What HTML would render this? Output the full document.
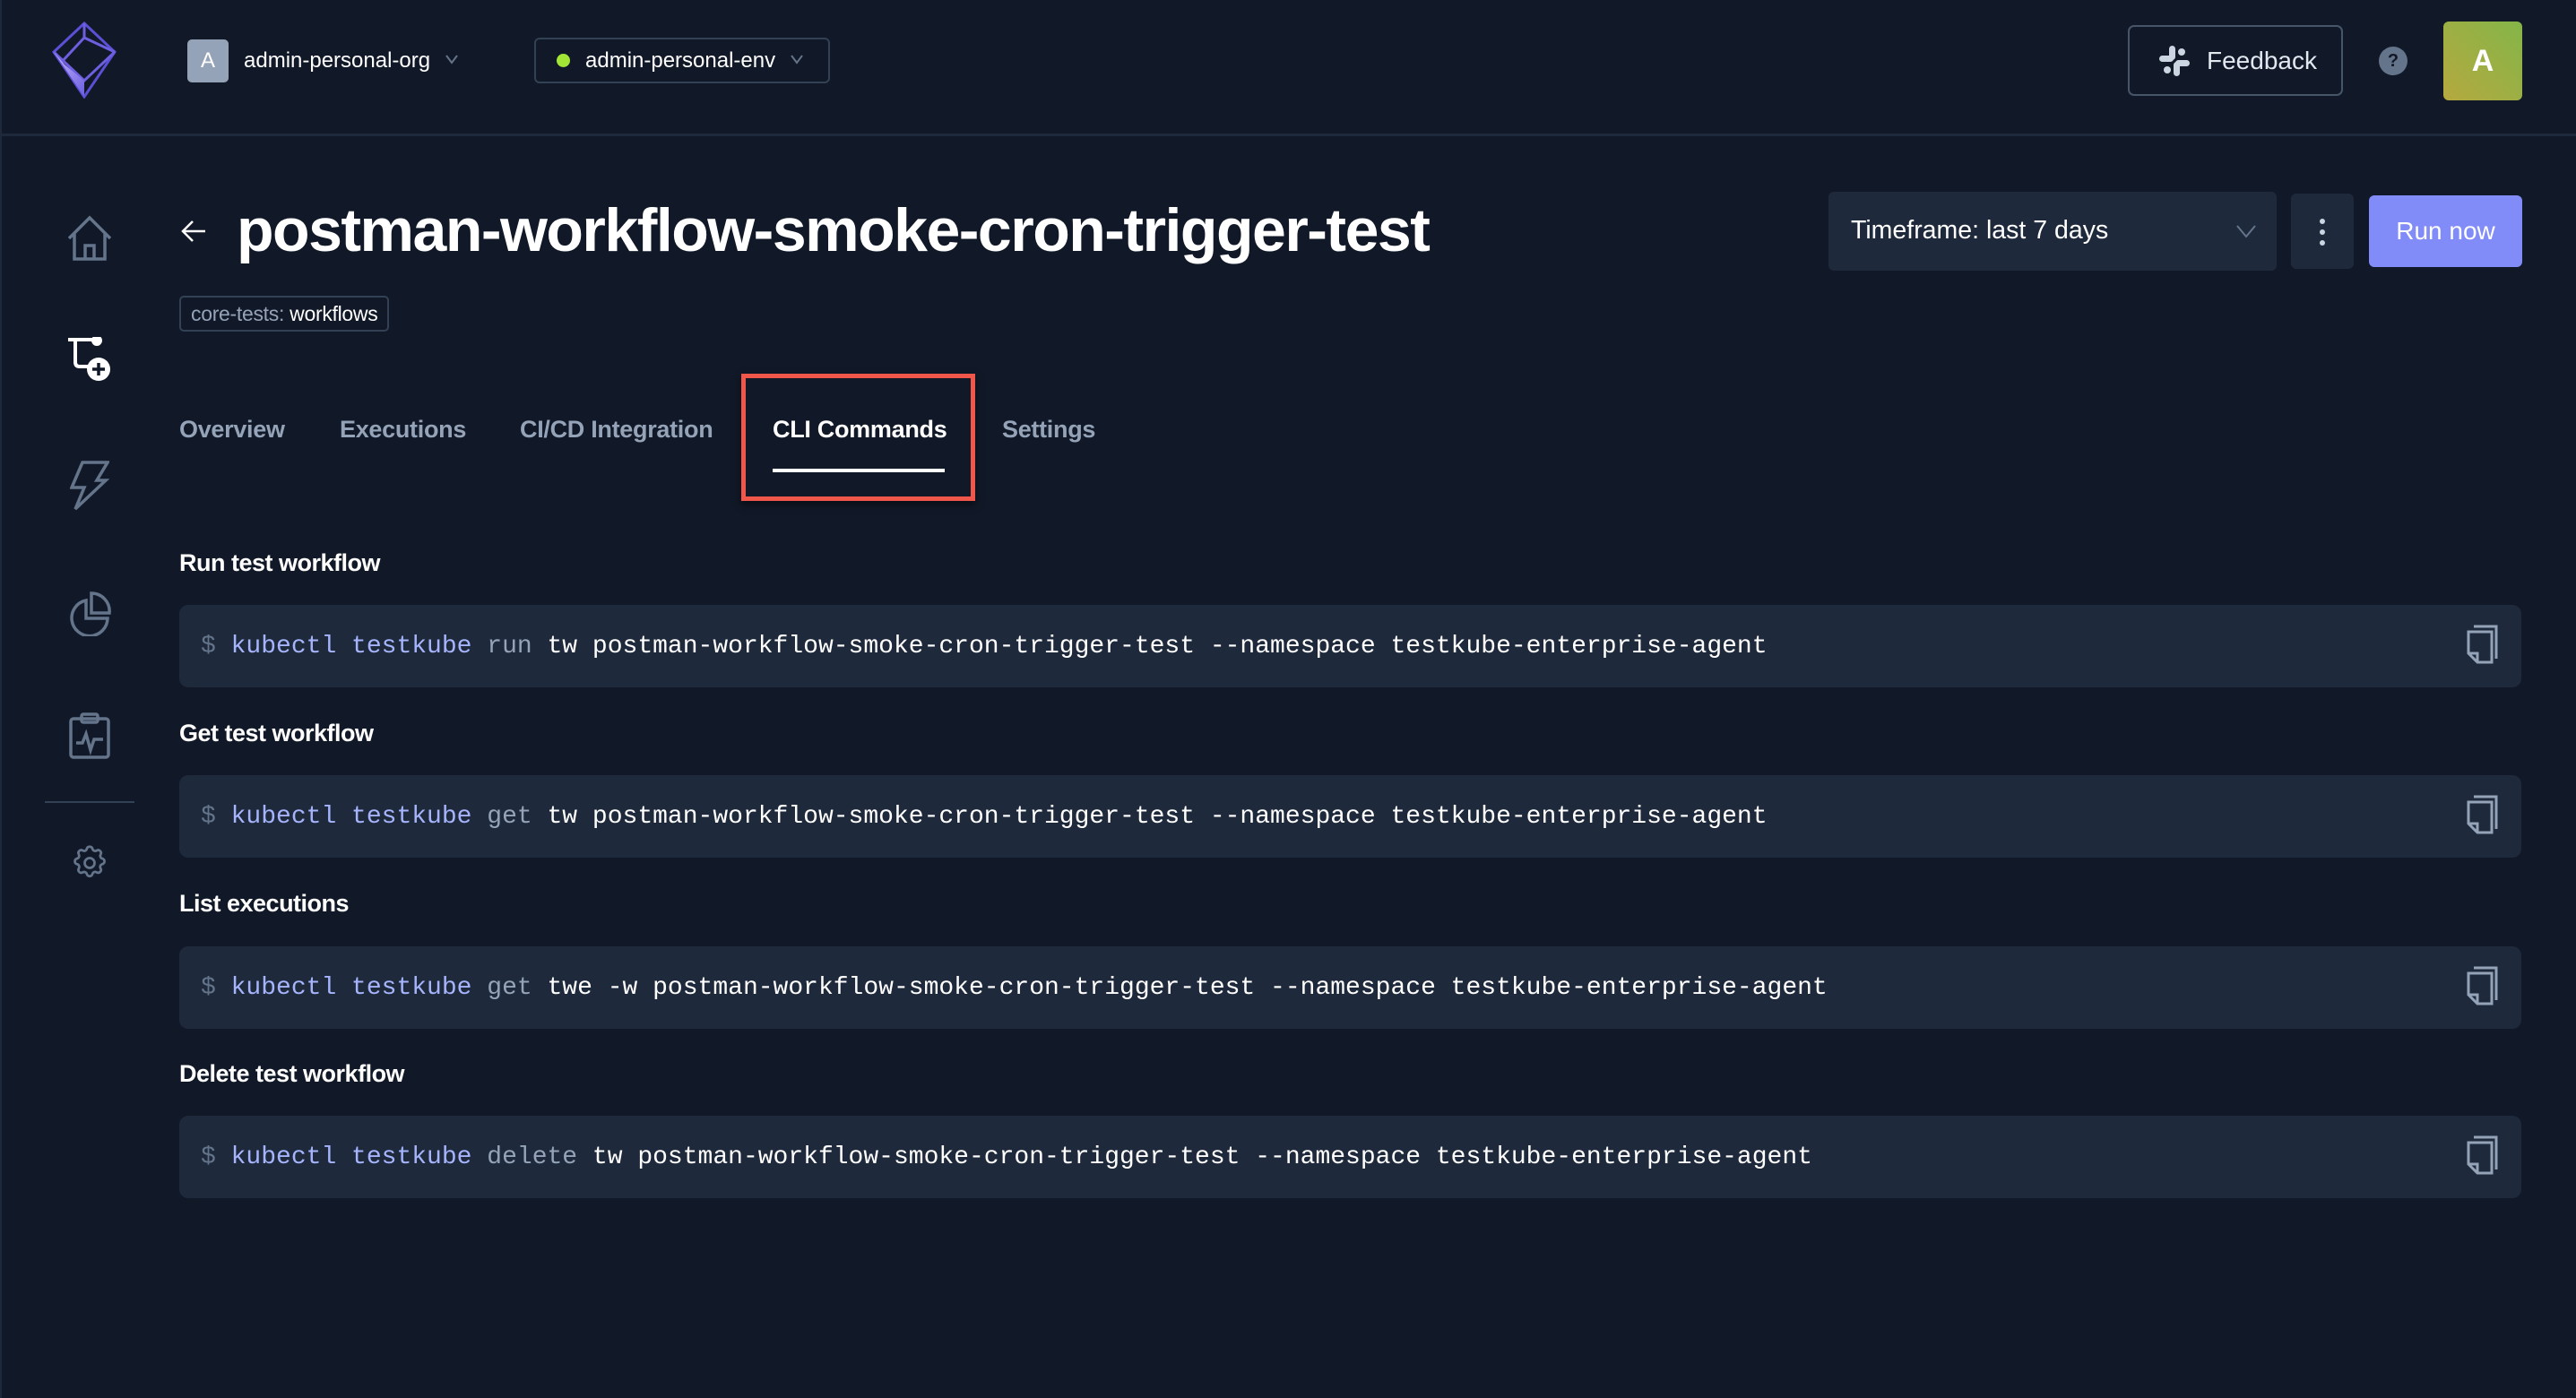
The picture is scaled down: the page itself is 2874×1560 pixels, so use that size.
<!DOCTYPE html>
<html><head><meta charset="utf-8"><style>
*{margin:0;padding:0;box-sizing:border-box}
body{width:2874px;height:1560px;background:#111827;font-family:"Liberation Sans",sans-serif;position:relative;overflow:hidden;color:#fff}
.a{position:absolute}
.top{left:0;top:0;width:2874px;height:152px;border-bottom:3px solid #1e293b}
.t{white-space:nowrap}
.code{left:200px;width:2613px;height:92px;background:#1e293b;border-radius:10px}
.code .txt{position:absolute;left:24px;top:1px;line-height:92px;font-family:"Liberation Mono",monospace;font-size:28px;color:#fff;white-space:nowrap}
.d{color:#64748b}.k{color:#a5b4fc}.v{color:#94a3b8}
.h{left:200px;font-size:27px;font-weight:bold;letter-spacing:-0.5px}
.tab{top:464px;font-size:27px;font-weight:bold;color:#94a3b8;letter-spacing:-0.3px}
.chev{stroke:#64748b;fill:none;stroke-width:2}
</style></head><body>
<div class="a" style="left:0;top:0;width:2px;height:1560px;background:#1e293b"></div>
<div class="a top"></div>
<svg class="a" style="left:58px;top:24px" width="72" height="86" viewBox="0 0 72 86">
<defs><linearGradient id="g" x1="0" y1="0" x2="1" y2="1"><stop offset="0" stop-color="#c4b5fd"/><stop offset="1" stop-color="#6d5fe0"/></linearGradient></defs>
<path d="M36 2 L70 34 L36 84 L2 34 Z" fill="none" stroke="#5b4fd6" stroke-width="3"/>
<path d="M2 34 L36 66 L70 34 M36 2 L36 18 L70 34 M36 18 L10 46" fill="none" stroke="#6d5fe0" stroke-width="3"/>
<path d="M2 34 L36 84 L36 66 L14 48 Z" fill="url(#g)"/>
</svg>
<div class="a" style="left:209px;top:44px;width:46px;height:48px;background:#94a3b8;border-radius:5px;color:#fff;font-size:24px;text-align:center;line-height:48px">A</div>
<div class="a t" style="left:272px;top:54px;font-size:24px;color:#fff">admin-personal-org</div>
<svg class="a" style="left:497px;top:60px" width="14" height="12"><path class="chev" d="M1 2 L7 10 L13 2"/></svg>
<div class="a" style="left:596px;top:42px;width:330px;height:51px;border:2px solid #334155;border-radius:6px"></div>
<div class="a" style="left:621px;top:60px;width:15px;height:15px;border-radius:50%;background:#a3e635"></div>
<div class="a t" style="left:653px;top:54px;font-size:24px">admin-personal-env</div>
<svg class="a" style="left:882px;top:60px" width="14" height="12"><path class="chev" d="M1 2 L7 10 L13 2"/></svg>
<div class="a" style="left:2374px;top:28px;width:240px;height:79px;border:2px solid #475569;border-radius:7px"></div>
<svg class="a" style="left:2408px;top:50px" width="36" height="36" viewBox="0 0 36 36"><g fill="#cbd5e1"><rect x="12" y="1" width="7" height="16" rx="3.5"/><rect x="17" y="19" width="7" height="16" rx="3.5"/><rect x="1" y="12" width="16" height="7" rx="3.5"/><rect x="19" y="17" width="16" height="7" rx="3.5"/><circle cx="26" cy="8" r="4"/><circle cx="10" cy="28" r="4"/></g></svg>
<div class="a t" style="left:2462px;top:52px;font-size:28px;color:#e2e8f0">Feedback</div>
<div class="a" style="left:2654px;top:52px;width:32px;height:32px;border-radius:50%;background:#64748b;color:#111827;font-size:20px;text-align:center;line-height:32px;font-weight:bold">?</div>
<div class="a" style="left:2726px;top:24px;width:88px;height:88px;border-radius:6px;background:linear-gradient(45deg,#b5a93f,#84b548);color:#fff;font-size:34px;font-weight:bold;text-align:center;line-height:88px">A</div>
<svg class="a" style="left:75px;top:240px" width="50" height="52" viewBox="0 0 50 52" fill="none" stroke="#64748b" stroke-width="3.5"><path d="M2 26 L25 3 L48 26 M8 21 V49 H42 V21 M20 49 V34 H30 V49"/></svg>
<svg class="a" style="left:74px;top:376px" width="52" height="52" viewBox="0 0 52 52" fill="none" stroke="#fff" stroke-width="4"><path d="M2 3 H32 M10 3 V28 Q10 33 15 33 H24"/><circle cx="34" cy="4" r="4" fill="#fff"/><circle cx="36" cy="36" r="13" fill="#fff" stroke="none"/><path d="M36 29 V43 M29 36 H43" stroke="#111827" stroke-width="3.5"/></svg>
<svg class="a" style="left:78px;top:514px" width="44" height="56" viewBox="0 0 44 56" fill="none" stroke="#64748b" stroke-width="3.5"><path d="M14 2 H42 L30 22 H40 L6 54 L16 30 H2 Z"/></svg>
<svg class="a" style="left:76px;top:660px" width="48" height="50" viewBox="0 0 48 50" fill="none" stroke="#64748b" stroke-width="3.5"><path d="M20 10 A20 20 0 1 0 44 30 H20 Z"/><path d="M26 2 A20 20 0 0 1 46 24 H26 Z"/></svg>
<svg class="a" style="left:76px;top:795px" width="48" height="52" viewBox="0 0 48 52" fill="none" stroke="#64748b" stroke-width="3.5"><rect x="3" y="7" width="42" height="43" rx="3"/><rect x="15" y="2" width="18" height="9" rx="2"/><path d="M9 34 H16 L20 24 L25 42 L29 30 H39"/></svg>
<div class="a" style="left:50px;top:894px;width:100px;height:2px;background:#334155"></div>
<svg class="a" style="left:78px;top:941px" width="44" height="44" viewBox="0 0 24 24" fill="none" stroke="#64748b" stroke-width="1.5"><path d="M10.3 3.3c.4-1.7 3-1.7 3.4 0a1.7 1.7 0 0 0 2.6 1.1c1.5-.9 3.3.8 2.4 2.4a1.7 1.7 0 0 0 1 2.5c1.8.4 1.8 3 0 3.4a1.7 1.7 0 0 0-1 2.6c.9 1.5-.9 3.3-2.4 2.4a1.7 1.7 0 0 0-2.6 1c-.4 1.8-3 1.8-3.4 0a1.7 1.7 0 0 0-2.5-1c-1.6.9-3.3-.9-2.4-2.4a1.7 1.7 0 0 0-1.1-2.6c-1.7-.4-1.7-3 0-3.4a1.7 1.7 0 0 0 1.1-2.5c-.9-1.6.8-3.3 2.4-2.4 1 .6 2.3.1 2.5-1.1z"/><circle cx="12" cy="12" r="3"/></svg>
<svg class="a" style="left:201px;top:244px" width="30" height="28" viewBox="0 0 30 28" fill="none" stroke="#fff" stroke-width="2.5"><path d="M28 14 H3 M14 3 L3 14 L14 25"/></svg>
<div class="a t" style="left:264px;top:212px;font-size:68px;font-weight:bold;letter-spacing:-1.5px;line-height:90px">postman-workflow-smoke-cron-trigger-test</div>
<div class="a t" style="left:200px;top:330px;height:40px;border:2px solid #334155;border-radius:5px;padding:0 11px;line-height:36px;font-size:23px;color:#94a3b8;letter-spacing:-0.3px">core-tests: <span style="color:#fff">workflows</span></div>
<div class="a" style="left:2040px;top:214px;width:500px;height:88px;background:#1e293b;border-radius:6px"></div>
<div class="a t" style="left:2065px;top:241px;font-size:28.5px">Timeframe: last 7 days</div>
<svg class="a" style="left:2495px;top:250px" width="22" height="16"><path class="chev" d="M1 2 L11 14 L21 2"/></svg>
<div class="a" style="left:2556px;top:216px;width:70px;height:84px;background:#1e293b;border-radius:6px"></div>
<div class="a" style="left:2588px;top:244px;width:6px;height:6px;border-radius:50%;background:#cbd5e1;box-shadow:0 12px 0 #cbd5e1,0 24px 0 #cbd5e1"></div>
<div class="a t" style="left:2643px;top:218px;width:171px;height:80px;background:#818cf8;border-radius:6px;font-size:28px;text-align:center;line-height:80px">Run now</div>
<div class="a t tab" style="left:200px">Overview</div>
<div class="a t tab" style="left:379px">Executions</div>
<div class="a t tab" style="left:580px">CI/CD Integration</div>
<div class="a t tab" style="left:862px;color:#fff">CLI Commands</div>
<div class="a t tab" style="left:1118px">Settings</div>
<div class="a" style="left:862px;top:523px;width:192px;height:4px;background:#fff"></div>
<div class="a" style="left:827px;top:417px;width:261px;height:142px;border:5px solid #f0574a;box-shadow:0 4px 8px rgba(0,0,0,.5)"></div>
<div class="a t h" style="top:613px">Run test workflow</div>
<div class="a code" style="top:675px"><div class="txt"><span class="d">$</span> <span class="k">kubectl testkube</span> <span class="v">run</span> tw postman-workflow-smoke-cron-trigger-test --namespace testkube-enterprise-agent</div></div>
<div class="a t h" style="top:803px">Get test workflow</div>
<div class="a code" style="top:865px"><div class="txt"><span class="d">$</span> <span class="k">kubectl testkube</span> <span class="v">get</span> tw postman-workflow-smoke-cron-trigger-test --namespace testkube-enterprise-agent</div></div>
<div class="a t h" style="top:993px">List executions</div>
<div class="a code" style="top:1056px"><div class="txt"><span class="d">$</span> <span class="k">kubectl testkube</span> <span class="v">get</span> twe -w postman-workflow-smoke-cron-trigger-test --namespace testkube-enterprise-agent</div></div>
<div class="a t h" style="top:1183px">Delete test workflow</div>
<div class="a code" style="top:1245px"><div class="txt"><span class="d">$</span> <span class="k">kubectl testkube</span> <span class="v">delete</span> tw postman-workflow-smoke-cron-trigger-test --namespace testkube-enterprise-agent</div></div>
<svg width="0" height="0" style="position:absolute"><symbol id="cp" viewBox="0 0 36 44"><g fill="none" stroke="#94a3b8" stroke-width="3"><path d="M8 2 H33 V38"/><path d="M2 8 H28 V42 H12 L2 32 Z"/><path d="M2 32 H12 V42"/></g></symbol></svg>
<svg class="a" style="left:2752px;top:697px" width="36" height="44"><use href="#cp"/></svg>
<svg class="a" style="left:2752px;top:887px" width="36" height="44"><use href="#cp"/></svg>
<svg class="a" style="left:2752px;top:1078px" width="36" height="44"><use href="#cp"/></svg>
<svg class="a" style="left:2752px;top:1267px" width="36" height="44"><use href="#cp"/></svg>
</body></html>
